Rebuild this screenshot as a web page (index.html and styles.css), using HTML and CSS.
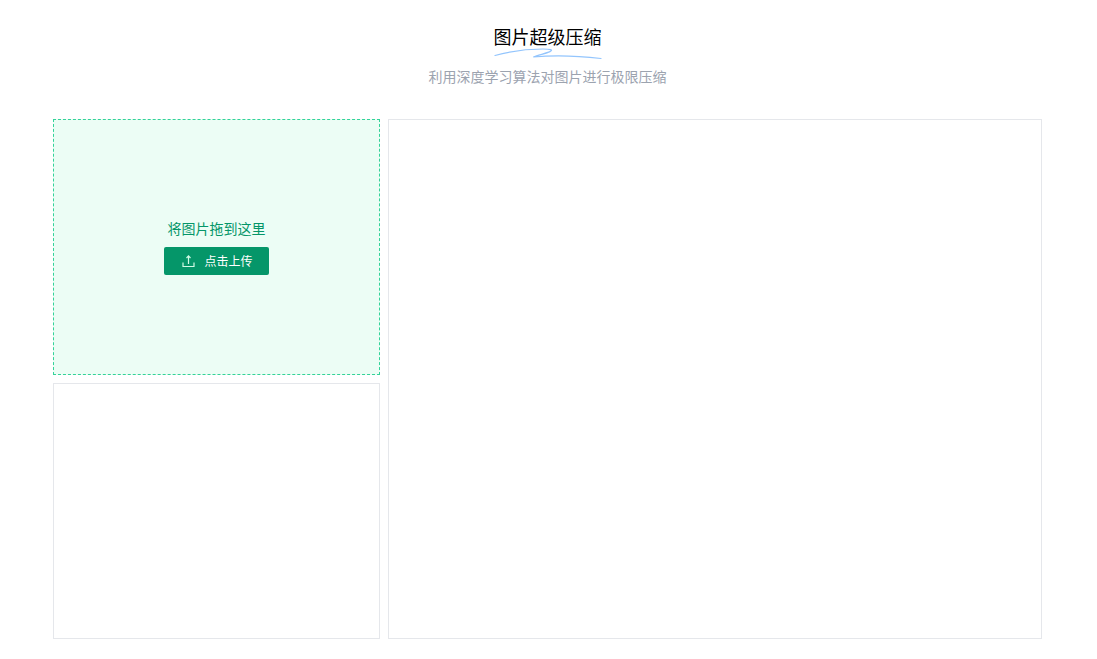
FILE: index.html
```html
<!DOCTYPE html>
<html lang="zh-CN">
<head>
<meta charset="utf-8">
<meta name="viewport" content="width=device-width, initial-scale=1">
<title>图片超级压缩</title>
<link rel="stylesheet" href="styles.css">
</head>
<body>
<main class="page">
  <header class="header">
    <h1 class="title">图片超级压缩
      <svg class="underline" viewBox="0 0 110 12" preserveAspectRatio="none" aria-hidden="true">
        <path d="M1 7.5C18 3 36 1 50 1C57 1 61 1.8 57 3.6C53 5.4 45 7 40 9C58 7.4 87 8 109 10.5"/>
      </svg>
    </h1>
    <p class="subtitle">利用深度学习算法对图片进行极限压缩</p>
  </header>
  <div class="workspace">
    <section class="dropzone">
      <p class="hint">将图片拖到这里</p>
      <button class="upload" type="button">
        <svg class="upload-icon" viewBox="0 0 14 14" aria-hidden="true">
          <path d="M1 8.5V12.5H12V8.5M6.5 10V2M4.5 4L6.5 1.9L8.5 4"/>
        </svg>
        点击上传
      </button>
    </section>
    <section class="panel" aria-label="图片列表"></section>
    <section class="panel preview" aria-label="预览"></section>
  </div>
</main>
</body>
</html>
```
FILE: styles.css
```css
* {
  box-sizing: border-box;
  margin: 0;
}

body {
  background: #fff;
  color: #000;
  font-family: "Noto Sans CJK SC", sans-serif;
}

.page {
  padding: 22px 55px 20px 53px;
}

.header {
  display: flex;
  flex-direction: column;
  align-items: center;
  gap: 16px;
  padding-bottom: 32px;
}

.title {
  position: relative;
  font-size: 18px;
  font-weight: 400;
  line-height: 28px;
}

.underline {
  position: absolute;
  left: 0;
  bottom: -10px;
  width: 100%;
  height: 12px;
  fill: none;
  stroke: #93c5fd;
  stroke-width: 1.2;
  stroke-linecap: round;
}

.subtitle {
  color: #9ca3af;
  font-size: 14px;
  font-weight: 400;
  line-height: 21px;
}

.workspace {
  display: grid;
  grid-template-columns: 1fr 2fr;
  grid-auto-rows: 256px;
  gap: 8px;
}

.dropzone {
  display: flex;
  flex-direction: column;
  align-items: center;
  justify-content: center;
  gap: 10px;
  border: 1px dashed #34d399;
  background: #ecfdf5;
}

.hint {
  color: #059669;
  font-size: 14px;
  line-height: 18px;
}

.upload {
  display: flex;
  align-items: center;
  gap: 8px;
  height: 28px;
  padding: 0 16px 0 18px;
  border: 0;
  border-radius: 2px;
  background: #059669;
  color: #fff;
  font-family: inherit;
  font-size: 12px;
  line-height: 28px;
  cursor: pointer;
}

.upload-icon {
  width: 14px;
  height: 14px;
  fill: none;
  stroke: #d1fae5;
  stroke-width: 1.2;
}

.panel {
  border: 1px solid #e5e7eb;
}

.preview {
  grid-column: 2;
  grid-row: 1 / span 2;
}
```
